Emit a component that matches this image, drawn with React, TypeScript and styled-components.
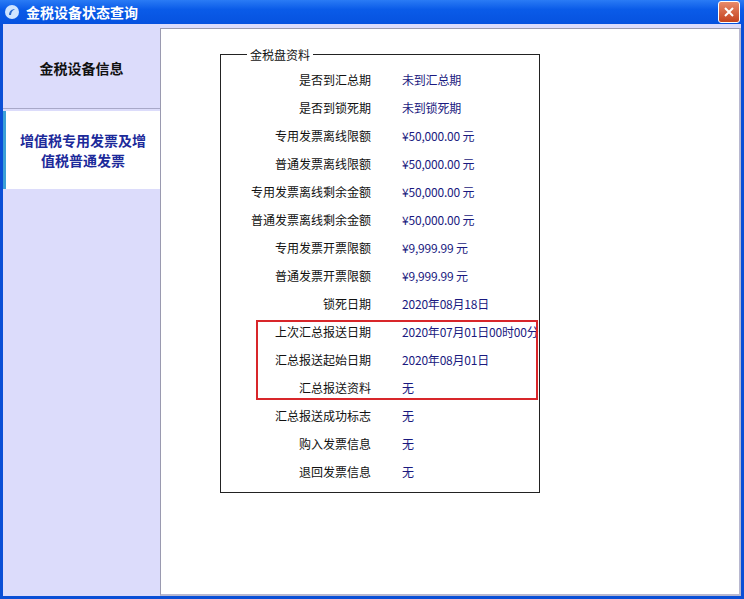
import React from "react";
import styled, { createGlobalStyle } from "styled-components";

const G = createGlobalStyle`
  html,body{margin:0;padding:0;background:#fff;}
  body{font-family:"Noto Sans CJK SC","Liberation Sans",sans-serif;}
`;
const Win = styled.div`
  width:744px;height:599px;display:flex;flex-direction:column;box-sizing:border-box;
  background:#0a4fd6;
`;
const Title = styled.div`
  height:24px;display:flex;align-items:center;gap:6px;padding:0 4px;
  background:linear-gradient(#2a7bf5,#0a5be8 40%,#0652df);
  color:#fff;font-weight:bold;font-size:14px;
`;
const Close = styled.div`
  margin-left:auto;width:20px;height:20px;border:1px solid #fff;border-radius:3px;
  background:linear-gradient(#e88a6a,#c4421e);display:flex;align-items:center;justify-content:center;
`;
const Body = styled.div`
  flex:1;display:flex;margin:0 3px 3px 3px;background:#dcdcfb;padding-top:4px;
`;
const Side = styled.div`
  width:157px;display:flex;flex-direction:column;
`;
const Tab = styled.div<{ $sel?: boolean }>`
  height:${p => (p.$sel ? 78 : 81)}px;display:flex;align-items:center;justify-content:center;text-align:center;
  font-weight:bold;font-size:14px;line-height:20px;
  background:${p => (p.$sel ? "#fff" : "#dcdcfb")};
  color:${p => (p.$sel ? "#1c2a9a" : "#111")};
  border-left:${p => (p.$sel ? "3px solid #3aa0d8" : "none")};
  border-bottom:${p => (p.$sel ? "none" : "1px solid #a8a8c8")};
  margin-bottom:${p => (p.$sel ? 0 : 2)}px;
  box-sizing:border-box;
`;
const Main = styled.div`
  flex:1;background:#fff;border:1px solid #9a9ab0;border-right:2px solid #b8b8d0;border-bottom:2px solid #b8b8d0;
  padding:25px 0 0 59px;
`;
const Group = styled.div`
  position:relative;width:320px;height:439px;border:1px solid #222;box-sizing:border-box;
  padding-top:10px;
`;
const Legend = styled.span`
  position:absolute;top:-9px;left:26px;background:#fff;padding:0 3px;font-size:12px;color:#111;
`;
const Row = styled.div`
  display:grid;grid-template-columns:150px 180px;column-gap:31px;height:28px;align-items:center;font-size:12px;
`;
const L = styled.span`text-align:right;color:#111;`;
const V = styled.span`color:#1a1a80;white-space:nowrap;letter-spacing:-0.2px;`;
const Red = styled.div`
  position:absolute;left:35px;top:265px;width:282px;height:80px;border:2px solid #d8262a;box-sizing:border-box;
`;

const rows: [string, string][] = [
  ["是否到汇总期", "未到汇总期"],
  ["是否到锁死期", "未到锁死期"],
  ["专用发票离线限额", "¥50,000.00 元"],
  ["普通发票离线限额", "¥50,000.00 元"],
  ["专用发票离线剩余金额", "¥50,000.00 元"],
  ["普通发票离线剩余金额", "¥50,000.00 元"],
  ["专用发票开票限额", "¥9,999.99 元"],
  ["普通发票开票限额", "¥9,999.99 元"],
  ["锁死日期", "2020年08月18日"],
  ["上次汇总报送日期", "2020年07月01日00时00分"],
  ["汇总报送起始日期", "2020年08月01日"],
  ["汇总报送资料", "无"],
  ["汇总报送成功标志", "无"],
  ["购入发票信息", "无"],
  ["退回发票信息", "无"],
];

export default function App() {
  return (
    <Win>
      <G />
      <Title>
        <svg width="16" height="16" viewBox="0 0 16 16"><circle cx="8" cy="8" r="7" fill="#cfe4ff" /><path d="M5 11c0-4 3-6 6-6-2 1-4 3-4 6z" fill="#2a6ad0" /></svg>
        金税设备状态查询
        <Close>
          <svg width="12" height="12" viewBox="0 0 12 12"><path d="M2 2l8 8M10 2l-8 8" stroke="#fff" strokeWidth="2" /></svg>
        </Close>
      </Title>
      <Body>
        <Side>
          <Tab>金税设备信息</Tab>
          <Tab $sel>增值税专用发票及增<br />值税普通发票</Tab>
        </Side>
        <Main>
          <Group>
            <Legend>金税盘资料</Legend>
            {rows.map(([a, b]) => (
              <Row key={a}><L>{a}</L><V>{b}</V></Row>
            ))}
            <Red />
          </Group>
        </Main>
      </Body>
    </Win>
  );
}
